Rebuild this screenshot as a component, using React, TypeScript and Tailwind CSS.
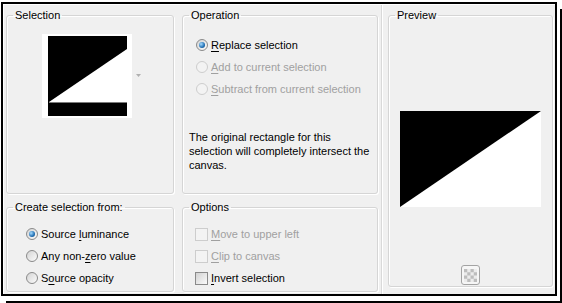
import type { ReactNode } from 'react'

function GroupBox({
  title,
  className,
  children,
}: {
  title: string
  className: string
  children?: ReactNode
}): React.JSX.Element {
  return (
    <fieldset
      className={`rounded-[3px] border border-[#d5d5d5] shadow-[inset_1px_1px_0_#fff,1px_1px_0_#fff] ${className}`}
    >
      <legend className="ml-[6px] px-[2px] text-[11px] leading-[14px] text-black">{title}</legend>
      {children}
    </fieldset>
  )
}

function Radio({ checked = false, disabled = false }: { checked?: boolean; disabled?: boolean }) {
  return (
    <span
      className={`flex h-[12px] w-[12px] shrink-0 items-center justify-center rounded-full border ${
        disabled
          ? 'border-[#cdcdcd] bg-[#f3f3f3]'
          : 'border-[#8a8a8a] bg-[linear-gradient(135deg,#d4d4d4,#fbfbfb)]'
      }`}
    >
      {checked && (
        <span className="h-[6px] w-[6px] rounded-full bg-[radial-gradient(circle_at_35%_35%,#a6dcff,#2170b5_60%,#15426b)]" />
      )}
    </span>
  )
}

function Check({ disabled = false }: { disabled?: boolean }) {
  return (
    <span
      className={`h-[13px] w-[13px] shrink-0 border ${
        disabled
          ? 'border-[#cdcdcd] bg-[#f3f3f3]'
          : 'border-[#8a8a8a] bg-[linear-gradient(135deg,#d2d2d2,#fbfbfb)]'
      }`}
    />
  )
}

function Row({ children, disabled = false }: { children: ReactNode; disabled?: boolean }) {
  return (
    <div
      className={`flex h-[22px] items-center gap-[3px] text-[11px] ${
        disabled ? 'text-[#a0a0a0]' : 'text-black'
      }`}
    >
      {children}
    </div>
  )
}

const U = ({ children }: { children: ReactNode }) => (
  <span className="underline underline-offset-[2px]">{children}</span>
)

export default function App(): React.JSX.Element {
  return (
    <div className="h-[303px] w-[562px] bg-white pl-[1px] pt-[2px] font-['Liberation_Sans',Arial,sans-serif]">
      <div className="h-[294px] w-[556px] border-2 border-black shadow-[3px_5px_0_0_#fff,5px_7px_0_0_#000]">
        <div className="flex h-full border-l border-t border-white bg-[#f0f0f0]">
          {/* left column */}
          <div className="flex w-[170px] flex-col pl-[2px] pt-[3px]">
            <GroupBox title="Selection" className="h-[186px] w-[168px]">
              <div className="ml-[35px] mt-[12px] flex items-start">
                <div className="bg-white pb-[2px] pl-[6px] pr-[5px] pt-[2px]">
                  <svg width="79" height="80" viewBox="0 0 79 80">
                    <rect width="79" height="80" fill="#000" />
                    <polygon points="1,66 79,13 79,66" fill="#fff" />
                    <rect x="1" y="66" width="78" height="1" fill="#7a7a7a" />
                  </svg>
                </div>
                <svg className="ml-[4px] mt-[40px]" width="5" height="3" viewBox="0 0 5 3">
                  <polygon points="0,0 5,0 2.5,3" fill="#b0b0b0" />
                </svg>
              </div>
            </GroupBox>
            <GroupBox title="Create selection from:" className="mt-[6px] h-[92px] w-[168px]">
              <div className="ml-[19px] mt-[9px]">
                <Row>
                  <Radio checked />
                  <span>
                    Source <U>l</U>uminance
                  </span>
                </Row>
                <Row>
                  <Radio />
                  <span>
                    Any non-<U>z</U>ero value
                  </span>
                </Row>
                <Row>
                  <Radio />
                  <span>
                    S<U>o</U>urce opacity
                  </span>
                </Row>
              </div>
            </GroupBox>
          </div>

          {/* middle column */}
          <div className="ml-[8px] flex w-[196px] flex-col pt-[3px]">
            <GroupBox title="Operation" className="h-[186px] w-[196px]">
              <div className="ml-[13px] mt-[12px]">
                <Row>
                  <Radio checked />
                  <span>
                    <U>R</U>eplace selection
                  </span>
                </Row>
                <Row disabled>
                  <Radio disabled />
                  <span>
                    <U>A</U>dd to current selection
                  </span>
                </Row>
                <Row disabled>
                  <Radio disabled />
                  <span>
                    <U>S</U>ubtract from current selection
                  </span>
                </Row>
              </div>
              <p className="ml-[6px] mt-[30px] w-[184px] text-[11px] leading-[14px] text-black">
                The original rectangle for this selection will completely intersect the canvas.
              </p>
            </GroupBox>
            <GroupBox title="Options" className="mt-[6px] h-[92px] w-[196px]">
              <div className="ml-[12px] mt-[9px]">
                <Row disabled>
                  <Check disabled />
                  <span>
                    <U>M</U>ove to upper left
                  </span>
                </Row>
                <Row disabled>
                  <Check disabled />
                  <span>
                    <U>C</U>lip to canvas
                  </span>
                </Row>
                <Row>
                  <Check />
                  <span>
                    <U>I</U>nvert selection
                  </span>
                </Row>
              </div>
            </GroupBox>
          </div>

          {/* preview panel */}
          <div className="ml-[3px] flex flex-1 flex-col border-l border-[#d9d9d9] pl-[6px] pr-[2px] pt-[3px] shadow-[inset_1px_0_0_#fff]">
            <GroupBox title="Preview" className="flex h-[279px] w-[165px] flex-col items-center">
              <svg className="mt-[89px]" width="141" height="96" viewBox="0 0 141 96">
                <rect width="141" height="96" fill="#000" />
                <polygon points="0,96 141,0 141,96" fill="#fff" />
              </svg>
              <div className="mt-[58px] flex h-[20px] w-[19px] items-center justify-center rounded-[3px] border border-[#a3a3a3] bg-[#f6f6f6]">
                <svg width="13" height="13" viewBox="0 0 12 12">
                  <rect width="12" height="12" fill="#ececec" />
                  <rect x="0" y="0" width="3" height="3" fill="#bdbdbd" />
                  <rect x="6" y="0" width="3" height="3" fill="#bdbdbd" />
                  <rect x="3" y="3" width="3" height="3" fill="#bdbdbd" />
                  <rect x="9" y="3" width="3" height="3" fill="#bdbdbd" />
                  <rect x="0" y="6" width="3" height="3" fill="#bdbdbd" />
                  <rect x="6" y="6" width="3" height="3" fill="#bdbdbd" />
                  <rect x="3" y="9" width="3" height="3" fill="#bdbdbd" />
                  <rect x="9" y="9" width="3" height="3" fill="#bdbdbd" />
                </svg>
              </div>
            </GroupBox>
          </div>
        </div>
      </div>
    </div>
  )
}
